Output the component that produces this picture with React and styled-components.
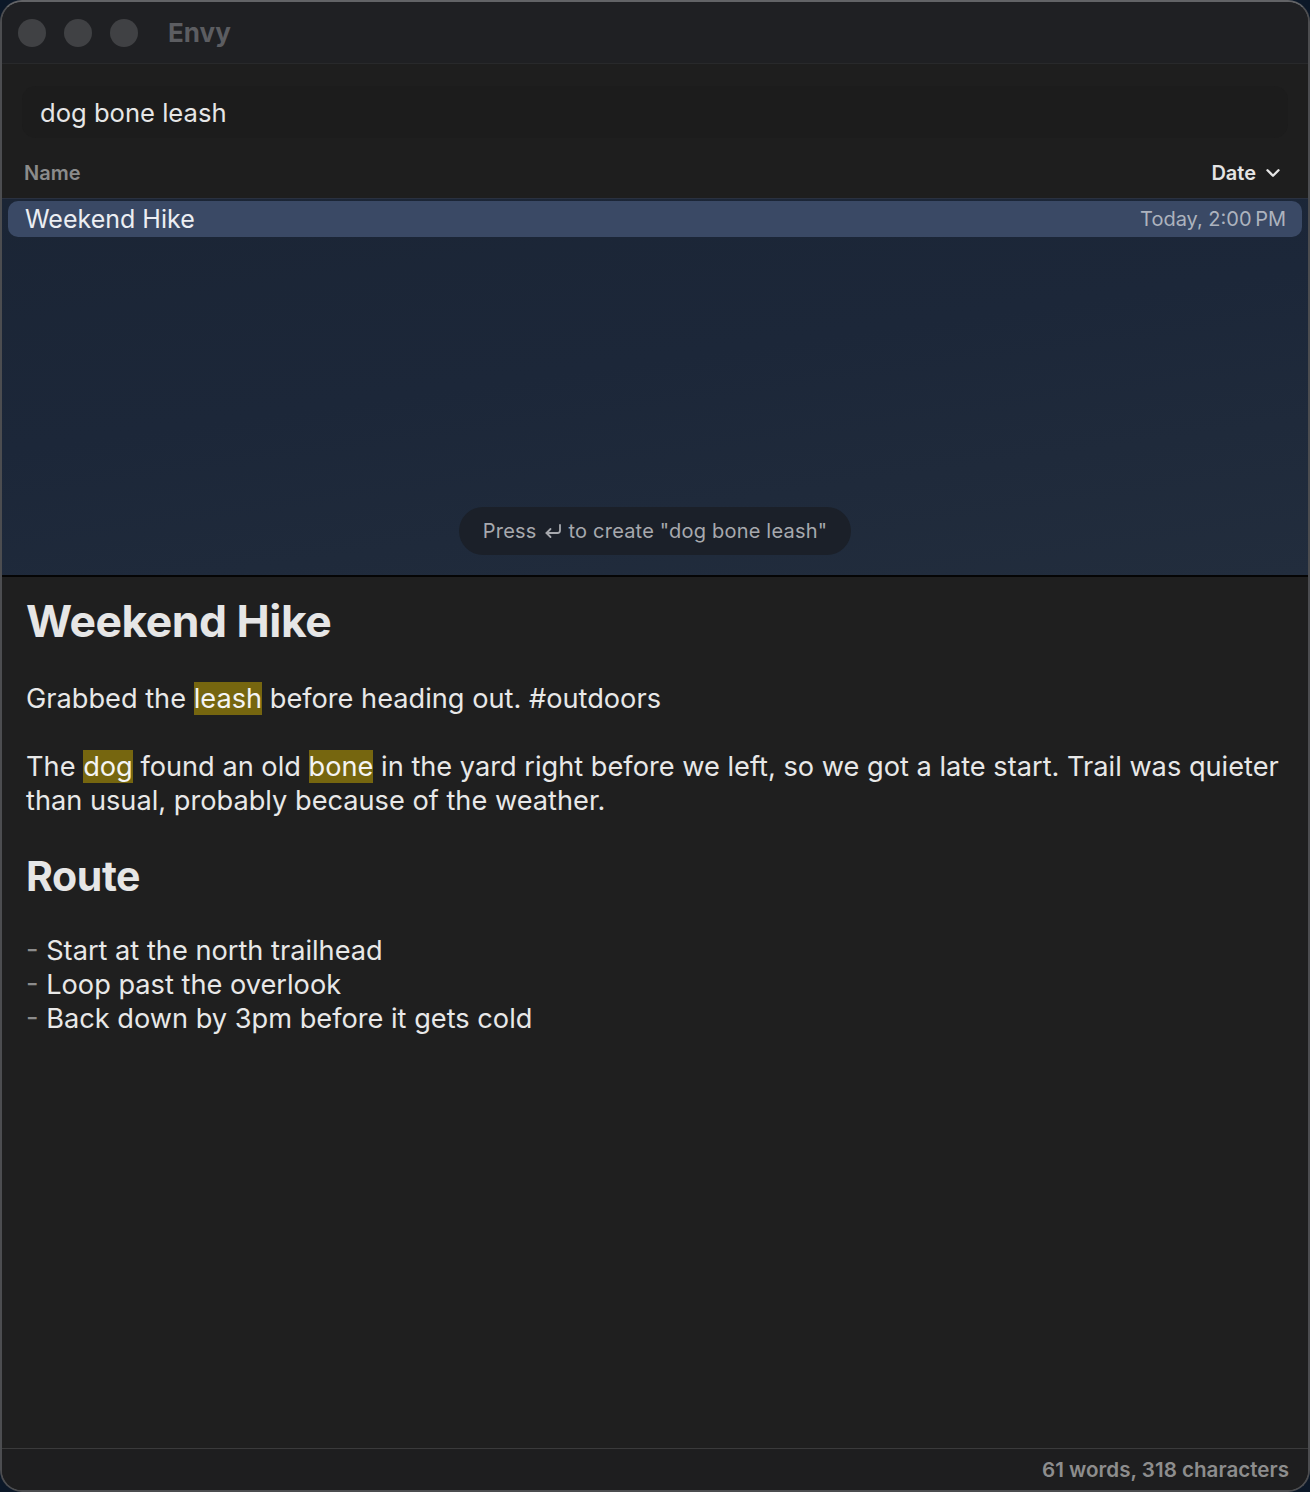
import React from 'react'
import styled, { createGlobalStyle } from 'styled-components'
import { ChevronDown } from 'lucide-react'

const GlobalStyle = createGlobalStyle`
  html, body {
    margin: 0;
    padding: 0;
    background: #0c1828;
  }
  * { box-sizing: border-box; }
  body {
    font-family: Inter, "Noto Sans", sans-serif;
    -webkit-font-smoothing: antialiased;
  }
`

const ReturnIcon = () => (
  <svg width="20" height="16" viewBox="0 0 20 16" fill="none" stroke="currentColor" strokeWidth="1.8" strokeLinecap="round" strokeLinejoin="round">
    <path d="M17 2v5.5a2.5 2.5 0 0 1-2.5 2.5H3.5" />
    <path d="M7.5 6L3.5 10l4 4" />
  </svg>
)

const hits = ['leash', 'dog', 'bone']

// wraps search terms in a highlight mark
const Highlighted = ({ text }) => {
  const parts = text.split(/(\bleash\b|\bdog\b|\bbone\b)/)
  return parts.map((p, i) => (hits.includes(p) ? <Mark key={i}>{p}</Mark> : <React.Fragment key={i}>{p}</React.Fragment>))
}

const App = () => {
  const query = 'dog bone leash'

  return (
    <>
      <GlobalStyle />
      <Window>
        <TitleBar>
          <Lights>
            <Light />
            <Light />
            <Light />
          </Lights>
          <Title>Envy</Title>
        </TitleBar>

        <SearchArea>
          <SearchField>{query}</SearchField>
        </SearchArea>

        <ListHeader>
          <HeaderLabel>Name</HeaderLabel>
          <HeaderLabel active>
            Date <ChevronDown size={22} strokeWidth={2.6} />
          </HeaderLabel>
        </ListHeader>

        <NoteList>
          <NoteRow selected>
            <RowTitle>Weekend Hike</RowTitle>
            <RowDate>Today, 2:00&#8201;PM</RowDate>
          </NoteRow>
          <CreateHint>
            Press <ReturnIcon /> to create "{query}"
          </CreateHint>
        </NoteList>

        <Editor>
          <H1>Weekend Hike</H1>
          <Para><Highlighted text="Grabbed the leash before heading out. #outdoors" /></Para>
          <Para>
            <Highlighted text="The dog found an old bone in the yard right before we left, so we got a late start. Trail was quieter than usual, probably because of the weather." />
          </Para>
          <H2>Route</H2>
          <Para>
            <Line><Dash>-</Dash> Start at the north trailhead</Line>
            <Line><Dash>-</Dash> Loop past the overlook</Line>
            <Line><Dash>-</Dash> Back down by 3pm before it gets cold</Line>
          </Para>
        </Editor>

        <StatusBar>61 words, 318 characters</StatusBar>
      </Window>
    </>
  )
}

export default App

const Window = styled.div`
  width: 1310px;
  height: 1492px;
  display: flex;
  flex-direction: column;
  border: 2px solid #4c4d50;
  border-top-color: #626366;
  border-radius: 22px;
  overflow: hidden;
  background: #1f1f1f;
`
const TitleBar = styled.div`
  height: 62px;
  flex-shrink: 0;
  display: flex;
  align-items: center;
  gap: 30px;
  padding-left: 16px;
  background: #1f2023;
  border-bottom: 1px solid #28292b;
`
const Lights = styled.div`
  display: flex;
  gap: 18px;
`
const Light = styled.span`
  width: 28px;
  height: 28px;
  border-radius: 50%;
  background: #404144;
`
const Title = styled.div`
  font-size: 26px;
  font-weight: 700;
  color: #5c5d61;
  letter-spacing: 0;
`
const SearchArea = styled.div`
  height: 84px;
  flex-shrink: 0;
  padding: 22px 20px 10px 20px;
  background: #1e1e1e;
`
const SearchField = styled.div`
  height: 52px;
  display: flex;
  align-items: center;
  padding-left: 18px;
  border-radius: 14px;
  background: #1c1c1c;
  font-size: 25.6px;
  color: #e6e6e6;
`
const ListHeader = styled.div`
  height: 51px;
  flex-shrink: 0;
  display: flex;
  align-items: center;
  justify-content: space-between;
  padding: 0 24px 0 22px;
  background: #1e1e1e;
  border-bottom: 1px solid #2a3140;
`
const HeaderLabel = styled.div`
  display: flex;
  align-items: center;
  gap: 6px;
  font-size: 20px;
  font-weight: 600;
  color: ${p => (p.active ? '#e4e4e4' : '#8b8b8b')};
`
const NoteList = styled.div`
  flex: 0 0 378px;
  display: flex;
  flex-direction: column;
  justify-content: space-between;
  align-items: center;
  padding: 2px 6px 20px 6px;
  background: linear-gradient(172deg, #1b2535 0%, #1c2739 45%, #222d3d 100%);
  border-bottom: 2px solid #050505;
`
const NoteRow = styled.div`
  align-self: stretch;
  height: 36px;
  display: flex;
  align-items: center;
  justify-content: space-between;
  padding: 0 16px 0 17px;
  border-radius: 10px;
  background: ${p => (p.selected ? '#3a4965' : 'transparent')};
`
const RowTitle = styled.div`
  font-size: 25px;
  color: #eceef3;
`
const RowDate = styled.div`
  font-size: 20px;
  color: #adb3be;
`
const CreateHint = styled.div`
  height: 48px;
  display: flex;
  align-items: center;
  gap: 6px;
  padding: 0 24px;
  border-radius: 24px;
  background: #1b2029;
  font-size: 20px;
  color: #a7a9ae;
  letter-spacing: 0.2px;
`
const Editor = styled.div`
  flex: 1;
  padding: 18px 24px 0 24px;
  background: #1f1f1f;
  color: #e8e8e8;
  font-size: 27.2px;
  line-height: 34px;
`
const H1 = styled.h1`
  margin: 0 0 35px 0;
  font-size: 44.5px;
  line-height: 52px;
  font-weight: 700;
  color: #e6e6e6;
  letter-spacing: -0.5px;
`
const H2 = styled.h2`
  margin: 0 0 34px 0;
  font-size: 41px;
  line-height: 48px;
  font-weight: 700;
  color: #e6e6e6;
  letter-spacing: -0.4px;
`
const Para = styled.p`
  margin: 0 0 34px 0;
`
const Line = styled.div``
const Dash = styled.span`
  color: #8c8c8c;
`
const Mark = styled.span`
  background: #76660f;
  color: #f4f4f4;
`
const StatusBar = styled.div`
  height: 42px;
  flex-shrink: 0;
  display: flex;
  align-items: center;
  justify-content: flex-end;
  padding: 0 19px 0 0;
  border-top: 1px solid #3a3a3b;
  background: #1e1e1f;
  font-size: 20.6px;
  font-weight: 600;
  color: #8d8d8d;
`
